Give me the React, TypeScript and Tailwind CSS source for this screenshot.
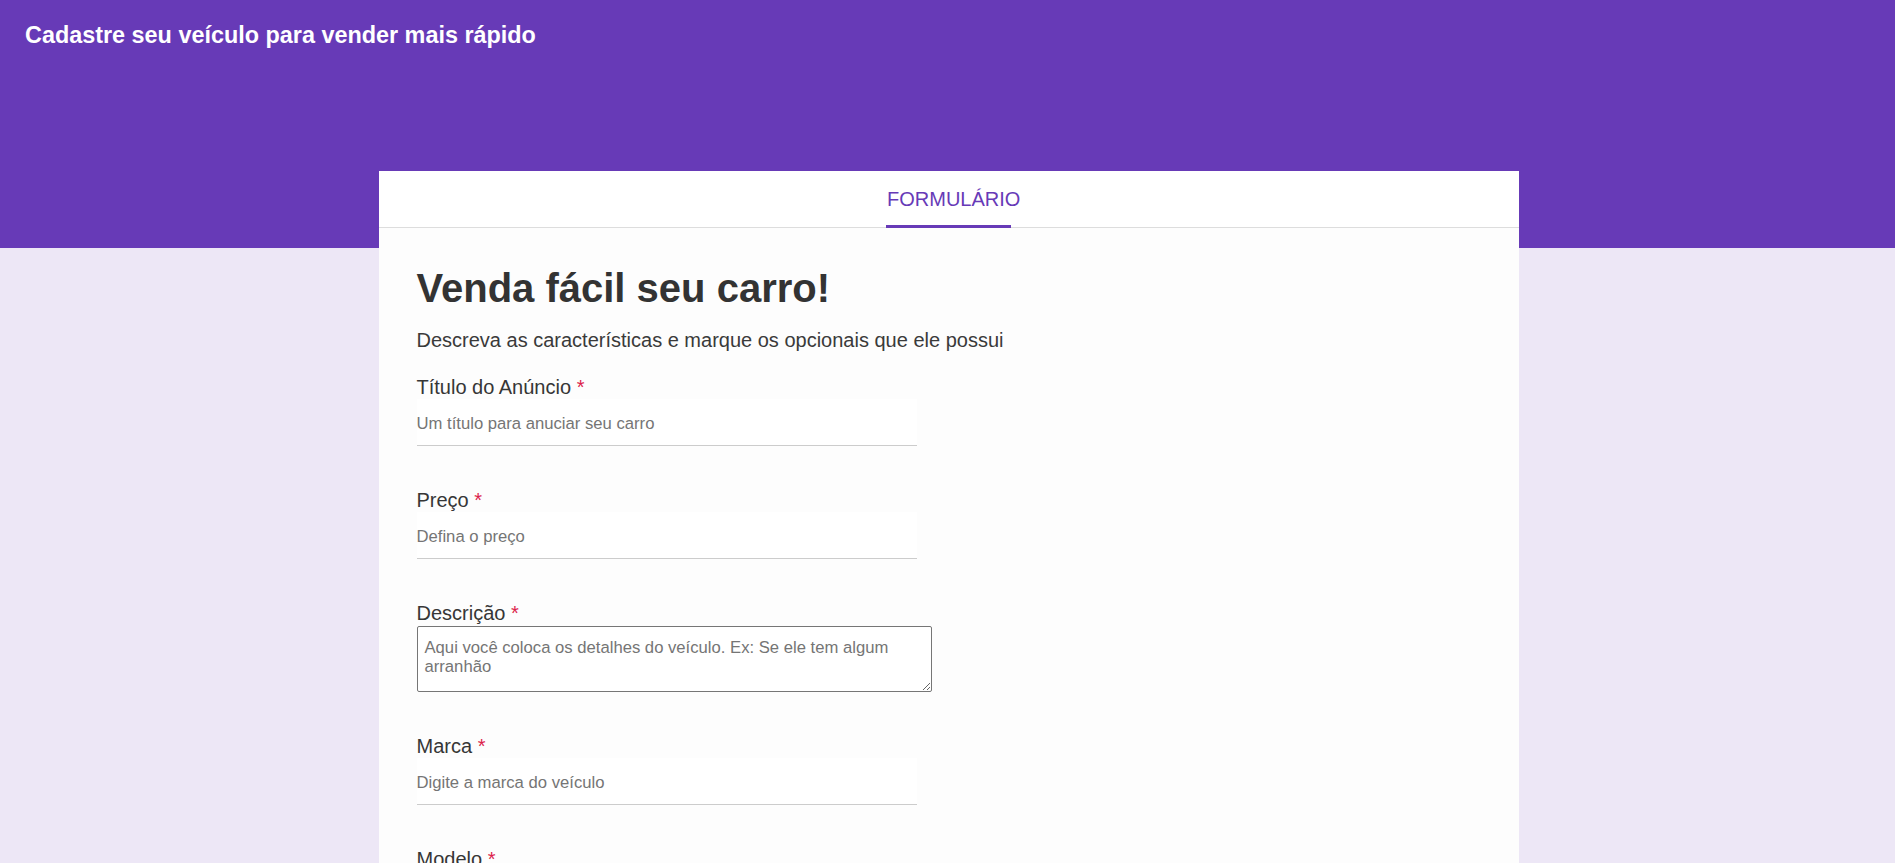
import React from "react";

type Field = {
  label: string;
  placeholder: string;
  multiline?: boolean;
};

const fields: Field[] = [
  { label: "Título do Anúncio", placeholder: "Um título para anuciar seu carro" },
  { label: "Preço", placeholder: "Defina o preço" },
  {
    label: "Descrição",
    placeholder: "Aqui você coloca os detalhes do veículo. Ex: Se ele tem algum arranhão",
    multiline: true,
  },
  { label: "Marca", placeholder: "Digite a marca do veículo" },
  { label: "Modelo", placeholder: "Digite o modelo do veículo" },
  { label: "Ano", placeholder: "Ano de fabricação" },
];

const FormField: React.FC<{ field: Field }> = ({ field }) => {
  return (
    <div className="flex flex-col">
      <label className="text-[20px] leading-[23px] text-[#363636]">
        {field.label} <span className="text-[#dc1f4c]">*</span>
      </label>
      {field.multiline ? (
        <textarea
          placeholder={field.placeholder}
          className="mt-[1px] w-[515px] h-[66px] border border-[#767676] rounded-[2px] bg-white pl-[7px] pr-[7px] pt-[11px] text-[16.67px] leading-[19px] text-[#333333] placeholder:text-[#757575] outline-none"
        />
      ) : (
        <input
          type="text"
          placeholder={field.placeholder}
          className="w-[500px] h-[47px] pt-[3px] bg-white border-b border-[#cccccc] text-[16.67px] text-[#333333] placeholder:text-[#757575] outline-none"
        />
      )}
    </div>
  );
};

export default function App() {
  return (
    <div
      className="h-screen overflow-hidden bg-[#ede7f6]"
      style={{ fontFamily: '"Liberation Sans", Arial, sans-serif' }}
    >
      <header className="h-[248px] bg-[#673ab7] pl-[25px] pt-[22px]">
        <h1 className="text-[23.4px] leading-[27px] font-bold text-white">
          Cadastre seu veículo para vender mais rápido
        </h1>
      </header>

      <main className="relative left-[1px] mx-auto -mt-[77px] w-[1140px] bg-[#fdfdfd]">
        <nav className="flex h-[57px] justify-center border-b border-[#dddddd] bg-white">
          <div className="relative flex w-[125px] items-center">
            <span className="pl-[1px] whitespace-nowrap text-[20px] leading-[23px] text-[#673ab7]">
              FORMULÁRIO
            </span>
            <div className="absolute -bottom-[1px] left-0 h-[3px] w-full bg-[#673ab7]" />
          </div>
        </nav>

        <section className="pl-[38px] pr-10 pt-[37px] pb-10">
          <h2 className="text-[40px] leading-[46px] font-bold text-[#333333]">
            Venda fácil seu carro!
          </h2>
          <p className="mt-[18px] text-[20px] leading-[23px] text-[#3a3a3a]">
            Descreva as características e marque os opcionais que ele possui
          </p>

          <form className="mt-[24px] flex flex-col gap-[43px]">
            {fields.map((f) => (
              <FormField key={f.label} field={f} />
            ))}
          </form>
        </section>
      </main>
    </div>
  );
}
